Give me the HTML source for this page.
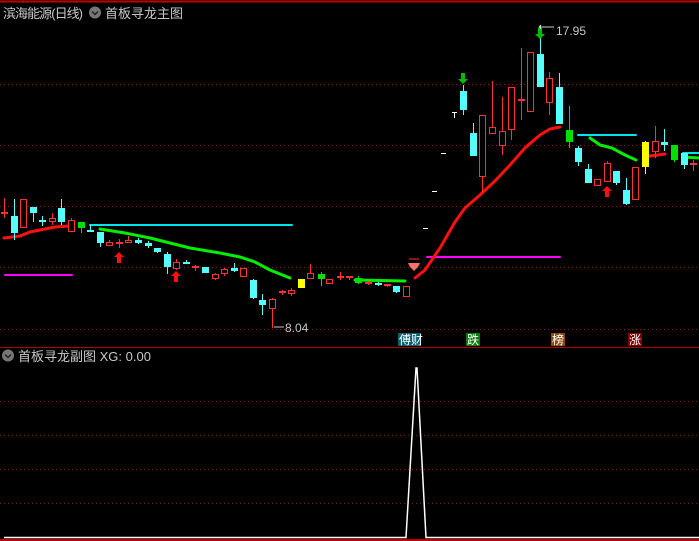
<!DOCTYPE html>
<html><head><meta charset="utf-8"><style>
html,body{margin:0;padding:0;background:#000;width:699px;height:541px;overflow:hidden}
svg{display:block}
text{font-family:"Liberation Sans","Noto Sans CJK SC",sans-serif}
</style></head><body>
<svg id="s" width="699" height="541" xmlns="http://www.w3.org/2000/svg">
<rect width="699" height="541" fill="#000"/>
<line x1="0" y1="1.5" x2="699" y2="1.5" stroke="#c00000" stroke-width="2"/>
<line x1="23" y1="0" x2="23" y2="3" stroke="#c00000"/>
<g stroke="#8a1a1a" stroke-dasharray="1,3" stroke-width="1">
<line x1="0" y1="84.5" x2="699" y2="84.5"/><line x1="0" y1="145.5" x2="699" y2="145.5"/>
<line x1="0" y1="206.5" x2="699" y2="206.5"/><line x1="0" y1="267.5" x2="699" y2="267.5"/>
<line x1="0" y1="329.5" x2="699" y2="329.5"/>
<line x1="0" y1="401.5" x2="699" y2="401.5"/><line x1="0" y1="435.5" x2="699" y2="435.5"/>
<line x1="0" y1="469.5" x2="699" y2="469.5"/><line x1="0" y1="503.5" x2="699" y2="503.5"/>
</g>
<line x1="0" y1="347.5" x2="699" y2="347.5" stroke="#b00000"/>
<line x1="0" y1="540" x2="699" y2="540" stroke="#c00000" stroke-width="2"/>
<text x="3" y="18" fill="#c8c8c8" font-size="13" textLength="80">滨海能源(日线)</text>
<circle cx="95" cy="12.5" r="6" fill="#777"/><path d="M92 11.5l3 3 3-3" stroke="#222" stroke-width="1.5" fill="none"/>
<text x="105" y="18" fill="#c8c8c8" font-size="13">首板寻龙主图</text>
<circle cx="8" cy="355.5" r="6" fill="#777"/><path d="M5 354.5l3 3 3-3" stroke="#222" stroke-width="1.5" fill="none"/>
<text x="18" y="361" fill="#c8c8c8" font-size="13">首板寻龙副图 XG: 0.00</text>
<g fill="none" stroke-linecap="round">
<polyline points="5,275 72,275" stroke="#ff00ff" stroke-width="2"/>
<polyline points="90,225 292,225" stroke="#00e5ee" stroke-width="2"/>
<polyline points="427,257 560,257" stroke="#ff00ff" stroke-width="2"/>
<polyline points="578,135 636,135" stroke="#00e5ee" stroke-width="2"/>
<polyline points="683,153 699,153" stroke="#00e5ee" stroke-width="2"/>
<polyline points="4,238 20,236 30,232 45,229 55,227 70,226" stroke="#ff1010" stroke-width="3"/>
<polyline points="100,229 125,233 150,238 170,243 190,248 220,253 240,257 255,262 270,270 290,278" stroke="#00ee00" stroke-width="3"/>
<polyline points="355,280 405,281" stroke="#00ee00" stroke-width="3"/>
<polyline points="415,278 425,270 440,248 455,222 465,208 480,195 495,181 510,165 525,148 540,135 550,129 560,127" stroke="#ff1010" stroke-width="3"/>
<polyline points="590,138 600,145 612,148 625,155 636,160" stroke="#00ee00" stroke-width="3"/>
<polyline points="650,156 665,154" stroke="#ff1010" stroke-width="3"/>
<polyline points="683,157 699,158" stroke="#00ee00" stroke-width="3"/>
</g>
<g id="c"></g>
<g fill="#ff1010">
<path d="M119 252l-5 5h3v6h4v-6h3z"/><path d="M176 271l-5 5h3v6h4v-6h3z"/><path d="M607 186l-5 5h3v6h4v-6h3z"/>
</g>
<g fill="#00bb00">
<path d="M463 84l-5-5h3v-6h4v6h3z"/><path d="M540 39l-5-5h3v-6h4v6h3z"/>
</g>
<path d="M408 263h12l-2 4-4 4-4-4z" fill="#ff7070"/><line x1="409" y1="259" x2="419" y2="259" stroke="#ff3030"/>
<g stroke="#fff" fill="none"><line x1="441" y1="153.5" x2="446" y2="153.5"/><line x1="432" y1="191.5" x2="437" y2="191.5"/><line x1="423" y1="228.5" x2="428" y2="228.5"/><path d="M452 112.5h5M454.5 112v6"/></g>
<text x="556" y="35" fill="#c8c8c8" font-size="12">17.95</text>
<path d="M541 29l-2-2 2-2M540 27h14" stroke="#c8c8c8" fill="none"/>
<text x="285" y="332" fill="#c8c8c8" font-size="12">8.04</text>
<path d="M274 327h10" stroke="#c8c8c8"/>
<rect x="398" y="333" width="23" height="13" fill="#106070"/><text x="399" y="344" fill="#fff" font-size="12">傅财</text>
<rect x="466" y="333" width="14" height="13" fill="#0a7a0a"/><text x="467" y="344" fill="#fff" font-size="12">跌</text>
<rect x="551" y="333" width="14" height="13" fill="#8a4a10"/><text x="552" y="344" fill="#fff" font-size="12">榜</text>
<rect x="628" y="333" width="14" height="13" fill="#800000"/><text x="629" y="344" fill="#fff" font-size="12">涨</text>
<polyline points="4,537.5 406,537.5 416,368 417,368 426,537.5 699,537.5" fill="none" stroke="#fff" stroke-width="1.5"/>
</svg>
<script>
var C=[[4,212,214,198,218,'r',0],[14,216,233,199,240,'c'],[23,199,227,199,227,'r',1],[33,207,213,207,222,'c'],[42,220,222,216,226,'c'],[52,218,221,213,225,'r',1],[61,208,222,199,225,'c'],[71,220,231,218,232,'r',1],[81,222,228,222,233,'g'],[90,230,232,225,232,'c'],[100,232,243,232,247,'c'],[109,242,245,240,246,'r',1],[119,242,244,239,248,'r'],[128,240,242,236,243,'r',1],[138,240,243,238,244,'c'],[148,243,246,241,248,'c'],[157,248,252,248,253,'c'],[167,254,267,252,274,'c'],[176,262,268,259,270,'r',1],[186,262,264,260,264,'c'],[195,266,268,265,271,'r'],[205,267,273,267,273,'c'],[215,274,278,273,280,'r',1],[224,269,273,268,276,'r',1],[234,268,271,263,272,'c'],[243,268,276,268,276,'r',1],[253,280,298,279,299,'c'],[262,300,305,294,315,'c'],[272,299,308,298,328,'r',1],[282,291,293,290,295,'r'],[291,290,293,288,296,'r',1],[301,279,288,279,288,'y'],[310,273,278,264,278,'r',1],[321,274,279,272,286,'g'],[329,279,283,279,283,'r',1],[340,276,278,272,280,'r'],[349,276,278,276,280,'r'],[358,278,283,276,284,'g'],[368,282,284,281,285,'r'],[378,283,285,282,286,'c'],[387,284,286,284,287,'r'],[396,286,292,286,293,'c'],[406,286,296,286,296,'r',1],
[463,91,110,85,115,'c'],[473,133,156,123,156,'c'],[482,115,176,115,192,'r',1],[492,127,133,81,134,'r',1],[502,131,145,97,155,'r',1],[511,87,129,87,140,'r',1],[521,99,101,48,120,'r'],[530,52,111,52,111,'r',1],[540,54,87,25,87,'c'],[549,78,102,72,115,'r',1],[559,87,124,73,124,'c'],[569,130,142,106,148,'g'],[578,148,162,146,166,'c'],[588,169,183,164,183,'c'],[597,179,185,179,185,'r',1],[607,163,181,161,181,'r',1],[616,171,183,171,185,'c'],[626,190,204,178,205,'c'],[635,167,199,167,199,'r',1],[645,142,167,141,174,'y'],[655,141,151,126,158,'r',1],[664,142,145,129,151,'c'],[674,145,160,145,162,'g'],[684,153,165,153,169,'c'],[693,163,165,160,171,'r']];
var col={r:'#ff3030',c:'#54ffff',g:'#00e000',y:'#ffff00'};var h='';
C.forEach(function(k){var x=k[0],c=col[k[5]];h+='<line x1="'+(x+.5)+'" y1="'+k[3]+'" x2="'+(x+.5)+'" y2="'+k[4]+'" stroke="'+c+'"/>';
if(k[6])h+='<rect x="'+(x-2.5)+'" y="'+(k[1]+.5)+'" width="6" height="'+Math.max(1,k[2]-k[1])+'" fill="#000" stroke="'+c+'"/>';
else h+='<rect x="'+(x-3)+'" y="'+k[1]+'" width="7" height="'+Math.max(2,k[2]-k[1])+'" fill="'+c+'"/>';});
document.getElementById('c').innerHTML=h;
</script>
</body></html>
